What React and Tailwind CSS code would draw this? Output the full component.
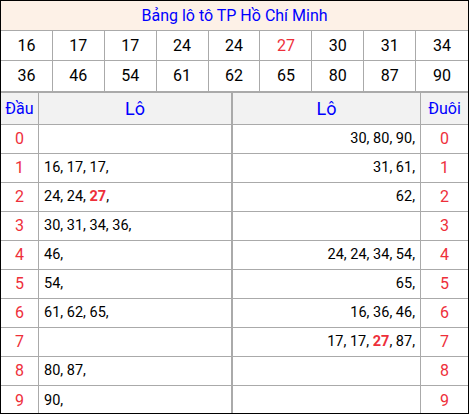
import React from "react";

const top = ["16", "17", "17", "24", "24", "27", "30", "31", "34", "36", "46", "54", "61", "62", "65", "80", "87", "90"];
const special = ["27"];

const rows = [
  { d: "0", left: [], right: ["30", "80", "90"] },
  { d: "1", left: ["16", "17", "17"], right: ["31", "61"] },
  { d: "2", left: ["24", "24", "27"], right: ["62"] },
  { d: "3", left: ["30", "31", "34", "36"], right: [] },
  { d: "4", left: ["46"], right: ["24", "24", "34", "54"] },
  { d: "5", left: ["54"], right: ["65"] },
  { d: "6", left: ["61", "62", "65"], right: ["16", "36", "46"] },
  { d: "7", left: [], right: ["17", "17", "27", "87"] },
  { d: "8", left: ["80", "87"], right: [] },
  { d: "9", left: ["90"], right: [] },
];

const Nums = ({ list }) => (
  <span className="whitespace-pre">
    {list.map((n, i) => (
      <React.Fragment key={i}>
        {special.includes(n) ? (
          <b className="text-[#ee2f3a] font-bold">{n}</b>
        ) : (
          n
        )}
        {i < list.length - 1 ? ", " : ","}
      </React.Fragment>
    ))}
  </span>
);

export default function App() {
  return (
    <div
      className="w-[469px] h-[414px] border border-black bg-white overflow-hidden"
      style={{ fontFamily: "Roboto, 'Noto Sans', sans-serif" }}
    >
      {/* Title */}
      <div className="h-[30px] bg-[#fdf1e7] border-b border-[#aaaaaa] flex items-center justify-center text-[16px] text-[#0000ff]">
        Bảng lô tô TP Hồ Chí Minh
      </div>

      {/* Numbers */}
      <div className="grid grid-cols-9">
        {top.map((n, i) => (
          <div
            key={i}
            className={`h-[30px] flex items-center justify-center text-[16px] border-[#aaaaaa] ${
              i % 9 !== 8 ? "border-r" : ""
            } ${i < 9 ? "border-b" : ""} ${special.includes(n) ? "text-[#ee2f3a]" : "text-black"}`}
          >
            {n}
          </div>
        ))}
      </div>

      {/* Đầu / Đuôi table */}
      <div className="grid grid-cols-[38px_194px_188px_1fr] border-t-2 border-[#aaaaaa] text-[14.5px]">
        <div className="h-[32px] bg-[#f2f2f2] flex items-center justify-center text-[16px] text-[#0000ff] border-r border-b border-[#aaaaaa]">
          Đầu
        </div>
        <div className="h-[32px] bg-[#f2f2f2] flex items-center justify-center text-[18px] text-[#0000ff] border-r-2 border-b border-[#aaaaaa]">
          Lô
        </div>
        <div className="h-[32px] bg-[#f2f2f2] flex items-center justify-center text-[18px] text-[#0000ff] border-r border-b border-[#aaaaaa]">
          Lô
        </div>
        <div className="h-[32px] bg-[#f2f2f2] flex items-center justify-center text-[16px] text-[#0000ff] border-b border-[#aaaaaa]">
          Đuôi
        </div>

        {rows.map((r, i) => (
          <React.Fragment key={r.d}>
            <div className={`h-[29px] flex items-center justify-center text-[16px] text-[#ee2f3a] border-r border-[#aaaaaa] ${i < 9 ? "border-b" : ""}`}>
              {r.d}
            </div>
            <div className={`h-[29px] flex items-center pl-[5px] text-black border-r-2 border-[#aaaaaa] ${i < 9 ? "border-b" : ""}`}>
              <Nums list={r.left} />
            </div>
            <div className={`h-[29px] flex items-center justify-end pr-[5px] text-black border-r border-[#aaaaaa] ${i < 9 ? "border-b" : ""}`}>
              <Nums list={r.right} />
            </div>
            <div className={`h-[29px] flex items-center justify-center text-[16px] text-[#ee2f3a] border-[#aaaaaa] ${i < 9 ? "border-b" : ""}`}>
              {r.d}
            </div>
          </React.Fragment>
        ))}
      </div>
    </div>
  );
}
